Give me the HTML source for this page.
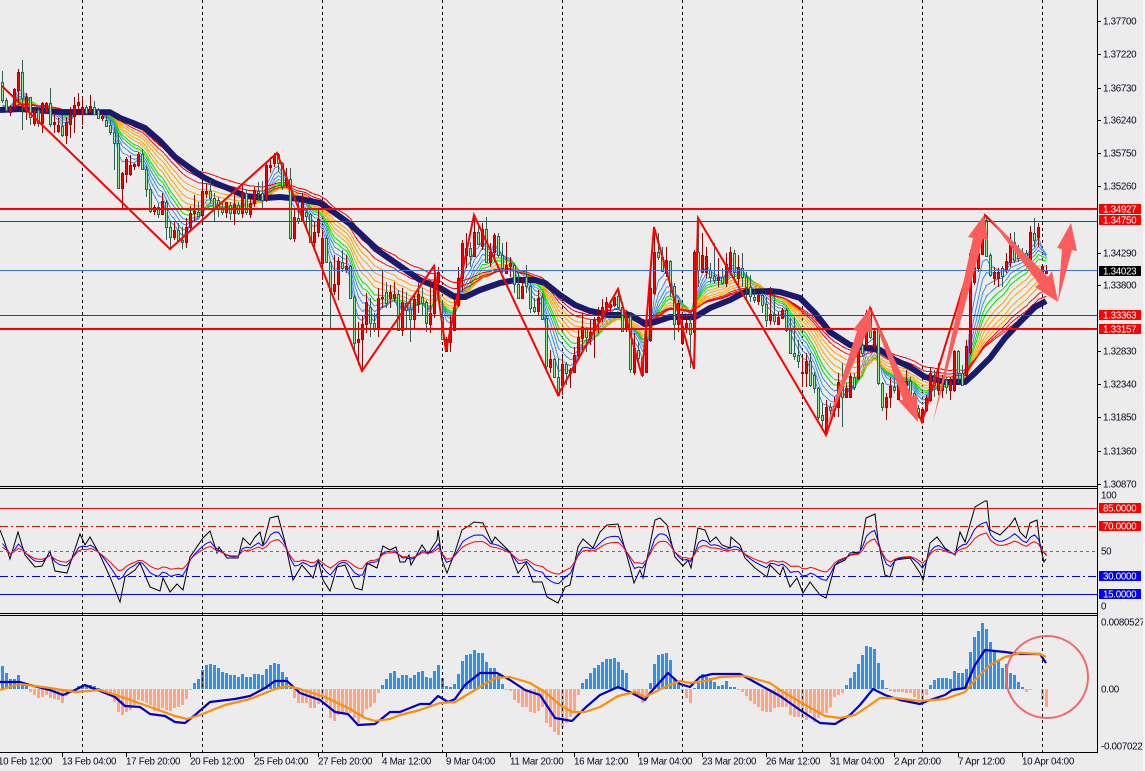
<!DOCTYPE html>
<html><head><meta charset="utf-8"><title>Chart</title>
<style>
html,body{margin:0;padding:0;background:#ececec;width:1145px;height:771px;overflow:hidden}
svg{display:block;position:absolute;left:0;top:0}
text{font-family:"Liberation Sans",sans-serif;font-size:9.8px;letter-spacing:-.3px;fill:#0a0a20}
text.w{fill:#fff}
</style></head><body>
<svg id="s" xmlns="http://www.w3.org/2000/svg" width="1145" height="771" viewBox="0 0 1145 771">
<rect width="1145" height="771" fill="#ececec"/>
<g id="hist" shape-rendering="crispEdges"></g>
<g stroke="#000" stroke-width="1" stroke-dasharray="3 3" shape-rendering="crispEdges">
<path d="M82.5 0V752M202.5 0V752M322.5 0V752M442.5 0V752M562.5 0V752M682.5 0V752M802.5 0V752M922.5 0V752M1042.5 0V752"/>
</g>
<g id="ribbon" fill="none" stroke-width="1" shape-rendering="crispEdges"></g>
<path id="navy" fill="none" stroke="#191970" stroke-width="6" stroke-linejoin="round"/>
<g id="candles"></g>
<g id="rsi" fill="none"></g>
<g id="macd" fill="none"></g>
<g shape-rendering="crispEdges" fill="none">
<path d="M0 209H1097M0 329H1097" stroke="#ff0000" stroke-width="2"/>
<path d="M0 221.5H1097M0 315.5H1097" stroke="#e00000"/>
<path d="M0 270.5H1097" stroke="#3a6fe8"/>
<path d="M0 508.5H1097" stroke="#ff0000"/>
<path d="M0 526.5H1097" stroke="#ff0000" stroke-dasharray="8 3 2 3"/>
<path d="M0 551.5H1097" stroke="#707070" stroke-dasharray="3 3"/>
<path d="M0 576.5H1097" stroke="#0000ff" stroke-dasharray="8 3 2 3"/>
<path d="M0 594.5H1097" stroke="#0000ff"/>
</g>
<polyline fill="none" stroke="#ff0000" stroke-width="2" points="2,86 170,249 277,153 362,371 434,266 446,351 474,215 558,395 618,289 642,376 654,227 694,369 698,218 826,435 870,308 922,422 985,215 1043,275"/>
<g fill="#fb5c5c">
<polygon points="826,428 857,331 853,330 870,308 872,332 867,332"/>
<polygon points="870,308 903,400 898,400 918,422 917,395 912,396"/>
<polygon points="933,422 973,238 968,237 984,215 988,240 983,239"/>
<polygon points="987,215 1039,284 1035,287 1058,302 1052,271 1048,277"/>
<polygon points="1058,302 1062,249 1057,248 1071,223 1077,251 1072,250"/>
</g>
<circle cx="1047" cy="677" r="41" fill="none" stroke="#f06a6a" stroke-width="2"/>
<g stroke="#000" shape-rendering="crispEdges" fill="none">
<path d="M1097.5 0V752.5H0M0 486.5H1097M0 488.5H1097M0 613.5H1097M0 615.5H1097"/>
<path d="M1097 21.5h4M1097 54.5h4M1097 88.5h4M1097 120.5h4M1097 153.5h4M1097 186.5h4M1097 253.5h4M1097 285.5h4M1097 351.5h4M1097 384.5h4M1097 417.5h4M1097 451.5h4M1097 484.5h4"/>
<path d="M62.5 752v5M126.5 752v5M190.5 752v5M254.5 752v5M318.5 752v5M382.5 752v5M446.5 752v5M510.5 752v5M574.5 752v5M638.5 752v5M702.5 752v5M766.5 752v5M830.5 752v5M894.5 752v5M958.5 752v5M1022.5 752v5"/>
</g>
<g shape-rendering="crispEdges">
<rect x="1099" y="204" width="42" height="10" fill="#ff0000"/>
<rect x="1099" y="215" width="42" height="10" fill="#ff0000"/>
<rect x="1099" y="266" width="42" height="10" fill="#000"/>
<rect x="1099" y="310" width="42" height="10" fill="#ff0000"/>
<rect x="1099" y="324" width="42" height="10" fill="#ff0000"/>
<rect x="1099" y="503" width="42" height="10" fill="#ff0000"/>
<rect x="1099" y="521" width="42" height="10" fill="#ff0000"/>
<rect x="1099" y="571" width="42" height="10" fill="#0000ff"/>
<rect x="1099" y="589" width="42" height="10" fill="#0000ff"/>
</g>
<text x="1103" y="24.5">1.37700</text>
<text x="1103" y="57.5">1.37220</text>
<text x="1103" y="91.5">1.36730</text>
<text x="1103" y="123.5">1.36240</text>
<text x="1103" y="156.5">1.35750</text>
<text x="1103" y="189.5">1.35260</text>
<text x="1103" y="256.5">1.34290</text>
<text x="1103" y="288.5">1.33800</text>
<text x="1103" y="354.5">1.32830</text>
<text x="1103" y="387.5">1.32340</text>
<text x="1103" y="420.5">1.31850</text>
<text x="1103" y="454.5">1.31360</text>
<text x="1103" y="487.5">1.30870</text>
<text class="w" x="1103" y="212.5">1.34927</text>
<text class="w" x="1103" y="223.5">1.34750</text>
<text class="w" x="1103" y="274.5">1.34023</text>
<text class="w" x="1103" y="318.5">1.33363</text>
<text class="w" x="1103" y="332.5">1.33157</text>
<text x="1101" y="498.5">100</text>
<text class="w" x="1103" y="511.5">85.0000</text>
<text class="w" x="1103" y="529.5">70.0000</text>
<text x="1101" y="554.5">50</text>
<text class="w" x="1103" y="579.5">30.0000</text>
<text class="w" x="1103" y="597.5">15.0000</text>
<text x="1101" y="609.5">0</text>
<text x="1101" y="625.5">0.0080527</text>
<text x="1101" y="692.5">0.00</text>
<text x="1101" y="749.5">-0.007022</text>
<text x="-2" y="764.5">10 Feb 12:00</text>
<text x="62" y="764.5">13 Feb 04:00</text>
<text x="126" y="764.5">17 Feb 20:00</text>
<text x="190" y="764.5">20 Feb 12:00</text>
<text x="254" y="764.5">25 Feb 04:00</text>
<text x="318" y="764.5">27 Feb 20:00</text>
<text x="382" y="764.5">4 Mar 12:00</text>
<text x="446" y="764.5">9 Mar 04:00</text>
<text x="510" y="764.5">11 Mar 20:00</text>
<text x="574" y="764.5">16 Mar 12:00</text>
<text x="638" y="764.5">19 Mar 04:00</text>
<text x="702" y="764.5">23 Mar 20:00</text>
<text x="766" y="764.5">26 Mar 12:00</text>
<text x="830" y="764.5">31 Mar 04:00</text>
<text x="894" y="764.5">2 Apr 20:00</text>
<text x="958" y="764.5">7 Apr 12:00</text>
<text x="1022" y="764.5">10 Apr 04:00</text>
<rect x="1143" y="0" width="2" height="771" fill="#f6f6f6"/>
</svg>
<script>
var C="g71,103,82,100 g98,112,100,110 r105,116,107,112 r88,110,89,107 r69,103,72,90 g60,130,72,98 r93,120,97,110 g97,125,97,117 r107,126,110,123 g108,127,110,123 r102,133,103,123 r102,113,103,112 g88,127,103,124 r113,133,122,124 r118,133,125,131 g115,137,126,135 r117,144,122,135 r107,138,115,124 r97,133,105,116 r93,115,102,105 r97,125,107,114 g105,115,107,113 r95,113,106,112 g101,115,107,114 g108,119,110,118 r113,121,116,118 g115,127,120,126 g120,135,125,132 g127,170,132,143 g133,188,143,188 r172,209,173,188 r157,183,159,174 r155,176,165,174 r163,170,164,166 r152,167,154,165 g149,170,154,169 g165,197,169,189 g187,213,189,211 r205,215,207,211 g204,218,207,214 r193,215,201,214 g200,240,202,227 g222,250,227,237 r222,240,230,237 g223,242,230,240 g227,249,240,242 r218,248,227,242 r206,230,213,227 r195,222,211,213 g202,217,212,216 r183,220,191,215 r183,198,191,193 g180,203,191,198 g193,222,198,209 g197,217,200,209 g203,215,208,212 r202,218,202,212 g202,220,205,213 r193,225,204,213 g202,215,205,213 r183,218,193,213 g190,215,193,212 r197,218,203,214 r187,207,191,203 g182,200,191,193 g181,210,193,200 r162,202,165,200 r157,173,165,167 r153,167,155,163 g153,172,154,163 g162,190,163,186 r168,188,178,185 g168,240,179,238 r208,242,217,238 g203,224,218,221 r193,222,203,221 g208,231,212,216 g213,243,214,242 r222,247,232,242 r210,237,219,232 r230,280,238,263 g235,263,238,262 g261,330,262,291 r255,295,284,291 r257,300,261,284 g250,272,262,268 r255,273,266,269 g265,299,266,298 g295,350,297,343 r322,365,339,342 r315,370,324,339 r293,333,302,324 g298,337,307,323 g313,332,323,328 r288,337,298,328 r270,308,297,298 g282,308,292,303 r285,308,292,298 r282,302,294,298 g290,331,294,330 "+
"r288,336,302,330 g292,328,303,310 g298,342,309,319 r293,330,299,319 r283,313,294,304 g288,315,297,303 g300,332,302,323 r280,333,313,324 r265,318,281,313 r267,297,272,282 g300,340,317,339 r337,352,339,351 r315,352,327,342 r300,331,307,330 r267,307,278,305 r240,292,243,278 r233,268,248,255 g242,267,248,256 r215,257,232,256 g225,245,232,244 r223,250,229,246 g217,263,229,262 r243,267,252,262 r233,262,235,252 g233,257,236,255 g243,273,255,268 r242,274,265,273 r257,277,263,266 g263,293,265,284 g272,298,284,298 r277,299,286,298 g265,293,277,286 g283,313,286,308 g298,313,307,311 r290,315,298,311 g293,320,297,319 g315,370,318,366 r350,373,359,367 g358,378,359,377 g358,396,377,395 r357,395,364,385 g362,385,364,373 r368,388,370,373 r347,373,355,372 r330,360,337,355 r313,350,327,338 g327,352,329,337 r320,345,332,338 r317,358,320,330 r307,333,317,321 r299,322,307,318 r297,313,302,311 r300,312,304,307 r295,307,297,305 g289,310,296,307 g305,332,307,331 r310,332,315,329 g313,373,316,369 r333,375,348,372 g342,363,350,358 g357,377,358,375 r315,373,339,372 r278,342,288,340 r227,295,252,293 g233,260,252,257 g247,272,257,271 r247,277,260,273 g260,297,261,285 g283,340,286,324 r300,332,303,324 r313,344,326,343 r315,333,323,327 g318,368,323,334 r250,369,252,332 g218,287,252,270 r233,273,255,272 r247,278,256,272 g263,283,270,277 g243,283,276,280 r258,287,277,280 g268,285,277,283 r253,287,264,283 r247,275,252,271 g250,280,253,272 r255,285,267,278 g253,287,268,277 g272,300,277,287 g275,302,287,296 g290,303,297,300 r293,305,295,301 g293,313,295,305 g297,327,304,320 r287,325,314,320 g295,325,314,321 r312,325,317,324 r308,318,310,318 g308,332,310,330 g318,347,330,353 g317,360,353,356 g340,368,355,361 "+
"r357,387,372,373 r353,387,361,373 g353,387,361,385 g372,393,375,388 g387,420,388,417 g403,427,415,420 r400,435,407,433 g403,417,407,410 r397,417,405,410 r373,417,382,407 g363,427,383,397 r383,398,388,397 r373,398,376,397 g373,390,377,387 r347,380,350,378 g340,357,345,353 r310,347,313,345 g307,339,308,337 r328,350,331,347 g327,385,330,383 g382,411,383,407 r393,420,397,407 r377,408,386,397 g378,393,387,390 r380,400,383,399 r378,392,382,388 r370,388,381,385 g377,397,381,394 g392,410,393,397 g405,418,408,415 r407,423,409,422 r395,412,398,410 r367,402,373,400 g370,397,377,385 r363,395,378,390 r375,398,383,390 g377,394,380,387 r377,400,381,390 r350,392,351,390 g350,383,351,373 g365,385,373,385 r340,377,346,375 r250,355,253,352 r263,285,267,282 r250,272,253,268 r223,255,233,254 g215,257,220,256 g253,277,255,275 r267,285,272,278 r268,287,272,278 g266,287,268,276 r253,273,261,270 r233,267,245,262 g232,263,242,260 g245,262,253,258 g248,262,252,257 g250,265,253,258 r226,260,232,259 g218,247,233,240 r223,247,227,237 r265,279,266,277 r265,273,270,273";
var NS="http://www.w3.org/2000/svg";
function el(id,tag,a){var e=document.createElementNS(NS,tag);for(var k in a)e.setAttribute(k,a[k]);document.getElementById(id).appendChild(e);return e;}
var cs=C.split(" ").map(function(t){var v=t.slice(1).split(",").map(Number);return {c:t[0],h:v[0],l:v[1],a:v[2],b:v[3]};});
var wg="",wr="",bg="",br="",cl=[];
cs.forEach(function(d,k){
 var x=2.5+4*k,w="M"+x+" "+d.h+"V"+d.l,h=Math.max(d.b-d.a,1),b="M"+(x-1)+" "+(d.a+.5)+"h2v"+h+"h-2z";
 if(d.c=="g"){wg+=w;bg+=b;cl.push(d.b);}else{wr+=w;br+=b;cl.push(d.a);}
});
var N=[[0,110],[20,109],[60,112],[110,112.3],[120,118],[133,123],[145,128],[160,141],[175,157],[190,168],[203,177],[215,183],[230,189],[245,196],[265,198],[280,197],[300,199],[320,203],[335,213],[350,224],[365,238],[380,252],[400,266],[420,280],[440,288],[455,297],[465,297],[480,290],[500,283],[515,280],[535,280],[545,283],[560,295],[575,305],[590,311],[610,315],[630,315],[645,324],[655,322],[670,317],[695,317],[710,308],[730,300],[745,292],[770,291],[780,292],[800,298],[815,313],[830,332],[850,345],[865,348],[880,350],[895,360],[910,367],[925,377],[945,382],[965,382],[975,373],[990,358],[1005,338],[1020,322],[1035,307],[1046,301]];
function pts(a){return a.map(function(p){return p[0]+","+p[1];}).join(" ");}
function dp(a){return "M"+a.map(function(p){return p[0]+" "+p[1];}).join("L");}
document.getElementById("navy").setAttribute("d",dp(N));
[[4,"#3d8ef0"],[6,"#3d8ef0"],[8,"#3d8ef0"],[10,"#3d8ef0"],[12,"#00e800"],[14,"#00e800"],[17,"#ffa500"],[20,"#ffa500"],[24,"#ffa500"],[28,"#ffa500"],[33,"#ff1000"],[38,"#ff0000"],[44,"#ff0000"]].forEach(function(r){
 var a=2/(r[0]+1),e=108,p=[];
 cl.forEach(function(c,k){e+=a*(c-e);p.push([2.5+4*k,+e.toFixed(1)]);});
 el("ribbon","polyline",{points:pts(p),stroke:r[1]});
});
el("candles","path",{d:wg,stroke:"#2f5f58",fill:"none"});
el("candles","path",{d:wr,stroke:"#a00000",fill:"none"});
el("candles","path",{d:bg,stroke:"#2f5f58",fill:"#98ec98"});
el("candles","path",{d:br,stroke:"#b00000",fill:"#ff0000"});
var R=[[0,530],[5,543],[10,559],[18,532],[25,555],[35,567],[42,566],[50,551],[55,571],[67,573],[80,534],[85,545],[90,537],[100,555],[110,577],[120,602],[125,577],[135,570],[140,563],[150,587],[160,591],[163,578],[170,592],[177,584],[183,590],[190,557],[203,538],[210,531],[217,553],[219,547],[227,558],[238,558],[243,538],[250,545],[255,537],[260,532],[263,545],[270,518],[278,516],[285,542],[293,580],[302,565],[313,578],[318,560],[323,580],[330,591],[337,567],[345,565],[355,588],[362,590],[367,563],[377,568],[383,546],[390,550],[396,547],[400,562],[405,562],[409,555],[411,565],[422,545],[428,554],[437,540],[438,530],[442,560],[447,573],[455,552],[462,530],[470,525],[474,522],[483,523],[492,543],[495,537],[510,552],[518,573],[526,563],[533,582],[542,582],[547,597],[558,603],[565,587],[570,585],[578,547],[583,539],[593,548],[600,532],[607,525],[618,524],[630,567],[634,583],[640,570],[643,578],[655,520],[660,518],[667,525],[675,557],[683,566],[688,560],[691,568],[698,528],[705,530],[710,542],[716,537],[722,545],[730,548],[731,537],[740,545],[745,558],[755,568],[767,577],[770,565],[780,575],[783,567],[790,587],[797,578],[803,593],[810,582],[820,595],[826,598],[835,565],[845,560],[850,553],[860,552],[866,518],[875,514],[878,540],[885,575],[890,577],[895,560],[910,558],[920,573],[923,580],[930,543],[937,537],[945,548],[955,555],[960,532],[965,542],[975,507],[985,501],[987,501],[990,530],[1000,535],[1010,525],[1015,518],[1020,532],[1026,538],[1030,523],[1037,520],[1040,545],[1044,562],[1046,559]];
function at(x){for(var i=1;i<R.length;i++)if(x<=R[i][0]){var a=R[i-1],b=R[i];return a[1]+(b[1]-a[1])*(x-a[0])/(b[0]-a[0]);}return R[R.length-1][1];}
var bl=[],rd=[],eb=null,er=null;
for(var k=0;k<262;k++){var x=2.5+4*k,v=at(x)-555,tb=555+.62*v,tr=555+.42*v;
 eb=eb===null?tb:eb+.72*(tb-eb);er=er===null?tr:er+.62*(tr-er);
 bl.push([x,+eb.toFixed(1)]);rd.push([x,+er.toFixed(1)]);}
el("rsi","polyline",{points:pts(R),stroke:"#000",'stroke-width':1});
el("rsi","polyline",{points:pts(bl),stroke:"#0000ff",'stroke-width':1});
el("rsi","polyline",{points:pts(rd),stroke:"#ff0000",'stroke-width':1});
var H=[558,580,597,597,585,605,612,637,645,653,650,645,655,658,660,668,648,638,630,617,615,615,615,618,623,629,632,645,665,695,705,697,690,675,660,663,670,675,692,690,685,690,692,685,682,675,657,629,610,597,570,555,552,555,565,575,580,585,585,590,583,590,590,582,582,585,568,555,549,552,577,590,625,655,668,668,668,684,684,672,660,668,715,722,705,697,695,700,715,730,715,687,680,668,638,615,597,580,572,593,
585,585,593,585,575,573,590,593,572,555,593,617,622,612,582,542,525,522,510,518,518,545,563,563,585,612,629,632,660,670,680,682,695,698,692,680,730,742,755,765,742,730,712,695,645,610,597,580,565,555,545,537,537,535,545,570,580,628,640,645,670,645,608,553,525,522,519,540,595,608,640,655,668,625,610,582,590,595,605,617,615,603,620,622,630,635,648,662,673,680,692,695,695,685,680,680,682,705,710,710,
715,720,700,725,715,700,698,680,650,645,640,615,595,575,552,525,498,500,507,550,600,624,633,635,635,635,638,640,650,658,660,645,615,600,595,593,595,597,573,578,580,568,515,470,452,428,447,485,512,540,565,552,580,585,605,622,635,630,628,626,660,680];
H.forEach(function(Y,k){
 var t=480+Y/3,z=689;
 if(Math.abs(t-z)<.5)return;
 if(t<z)el("hist","rect",{x:1+4*k,y:Math.round(t),width:3,height:z-Math.round(t),fill:"#3291ee"});
 else el("hist","rect",{x:1+4*k,y:z,width:3,height:Math.max(1,Math.round(t)-z),fill:"#ffa584"});
});
var M=[[0,682],[20,682],[30,685],[50,690],[63,695],[75,690],[85,685],[100,691],[115,697],[125,706],[140,707],[150,714],[165,716],[175,722],[185,723],[195,715],[210,702],[235,699],[250,696],[265,688],[275,681],[287,681],[300,693],[320,700],[335,712],[348,714],[358,725],[375,724],[390,712],[400,712],[420,704],[430,704],[438,696],[448,702],[455,699],[465,685],[480,673],[497,673],[510,680],[525,690],[540,695],[555,718],[572,721],[585,708],[600,695],[618,687],[630,692],[645,700],[650,693],[668,673],[680,684],[690,687],[700,677],[712,674],[740,674],[760,685],[780,696],[800,710],[820,723],[835,724],[850,715],[860,705],[873,689],[885,695],[900,700],[920,704],[930,700],[945,695],[952,690],[965,688],[975,665],[985,650],[1005,652],[1020,654],[1040,654],[1046,663]];
var S=[[0,690],[20,684],[50,688],[75,692],[100,690],[125,698],[150,707],[175,716],[187,719],[200,715],[225,705],[250,699],[275,689],[287,686],[300,689],[325,697],[350,709],[365,718],[375,721],[390,719],[400,715],[420,710],[440,703],[455,702],[475,690],[495,678],[510,677],[530,683],[545,692],[560,705],[572,712],[585,712],[600,707],[618,696],[635,692],[645,697],[665,687],[680,681],[690,683],[705,681],[720,677],[745,676],[770,683],[780,690],[800,702],[825,716],[840,718],[855,715],[870,705],[880,698],[895,698],[920,701],[945,699],[965,692],[975,680],[990,665],[1005,657],[1020,653],[1040,654],[1046,657]];
el("macd","polyline",{points:pts(M),stroke:"#0000cd",'stroke-width':2.2,'stroke-linejoin':"round"});
el("macd","polyline",{points:pts(S),stroke:"#ff8f00",'stroke-width':2.2,'stroke-linejoin':"round"});
</script>
</body></html>
